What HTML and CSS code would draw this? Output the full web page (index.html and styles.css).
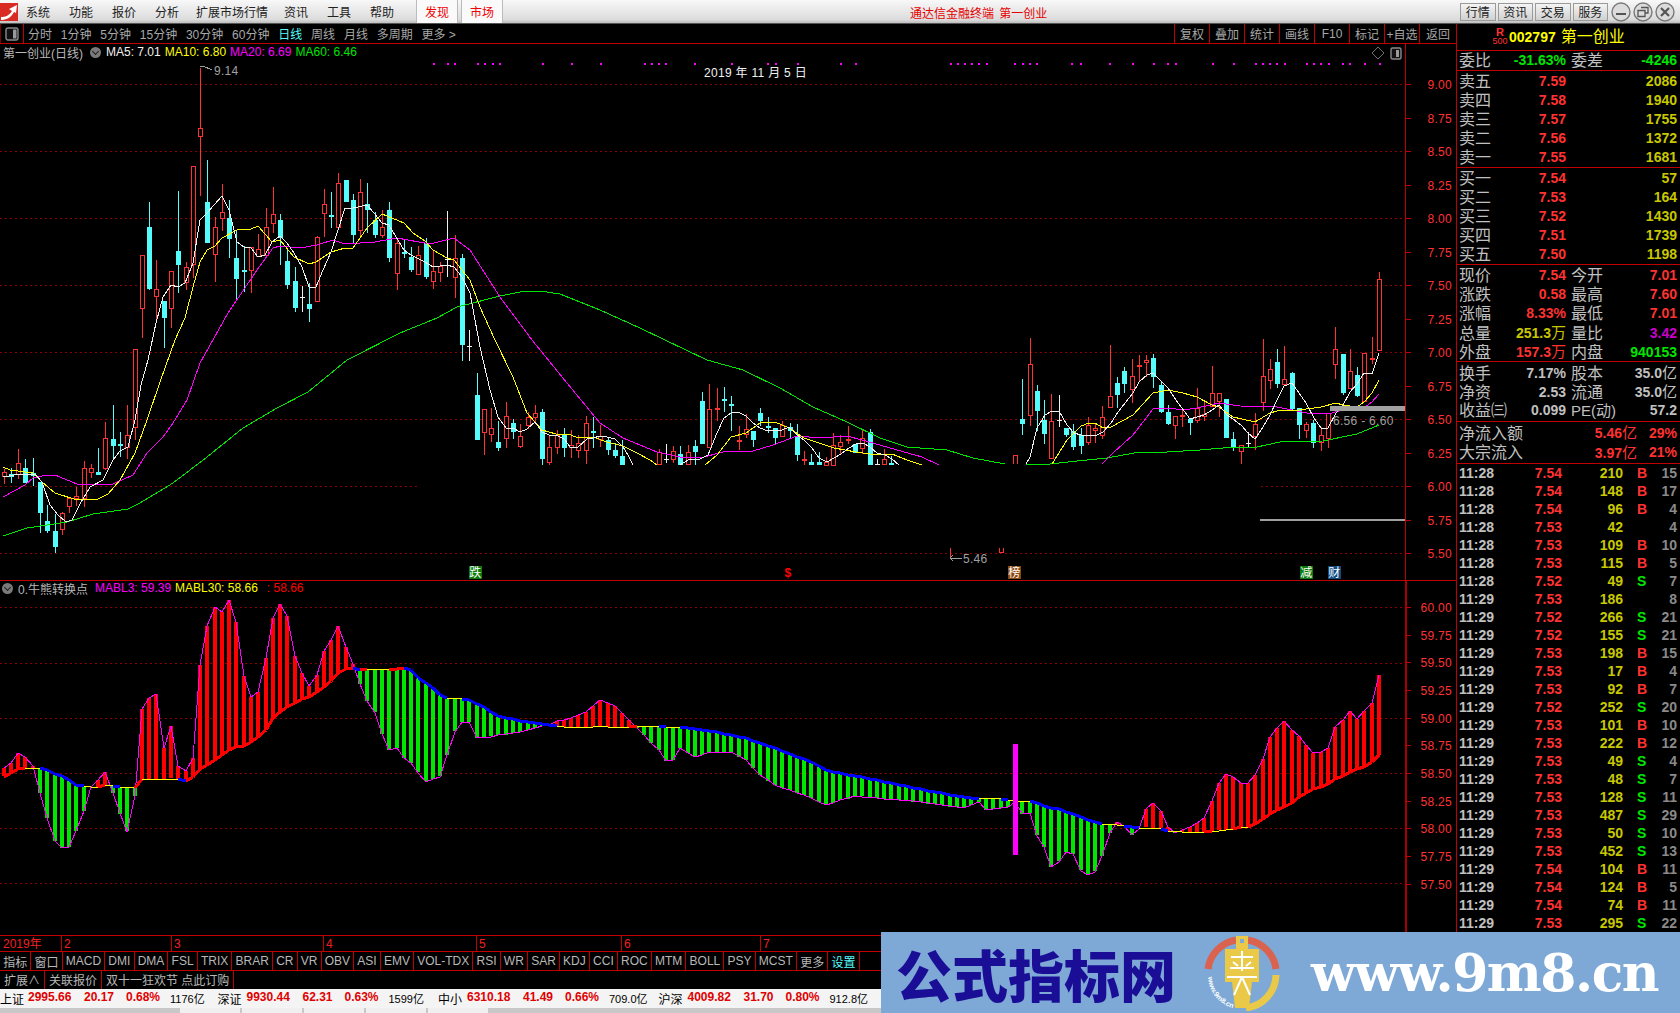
FILE: index.html
```html
<!DOCTYPE html>
<html lang="zh">
<head>
<meta charset="utf-8">
<title>通达信金融终端 第一创业</title>
<link rel="stylesheet" href="styles.css">
</head>
<body>
<div class="app">
  <header class="menubar">
    <svg class="app-logo" viewBox="0 0 18 18" width="18" height="18"><rect width="18" height="18" fill="#d92b24"/><path d="M1 14 C5 14 9 13 12 8 L9 6 L17 2 L16 10 L14 9 C11 15 6 17 1 17 Z" fill="#fff"/></svg>
    <nav class="menu">
      <span class="m1">系统</span><span class="m2">功能</span><span class="m2">报价</span><span class="m2">分析</span><span class="m3">扩展市场行情</span><span class="m4">资讯</span><span class="m2">工具</span><span class="m2">帮助</span>
    </nav>
    <span class="hot hot1">发现</span><span class="hot hot2">市场</span>
    <span class="win-title">通达信金融终端 第一创业</span>
    <div class="win-btns">
      <span class="wb">行情</span><span class="wb">资讯</span><span class="wb">交易</span><span class="wb">服务</span>
      <svg class="wc" viewBox="0 0 20 20" width="20" height="20"><circle cx="10" cy="10" r="9" fill="#dcdcdc" stroke="#7a7a7a" stroke-width="1.4"/><rect x="5" y="11" width="10" height="2" fill="#555"/></svg>
      <svg class="wc" viewBox="0 0 20 20" width="20" height="20"><circle cx="10" cy="10" r="9" fill="#dcdcdc" stroke="#7a7a7a" stroke-width="1.4"/><path d="M8 5.5h7v5.500h-2.500M5 8.500h7v6H5z" fill="none" stroke="#555" stroke-width="1.300"/></svg>
      <svg class="wc" viewBox="0 0 20 20" width="20" height="20"><circle cx="10" cy="10" r="9" fill="#dcdcdc" stroke="#7a7a7a" stroke-width="1.4"/><path d="M6 6l8 8M14 6l-8 8" stroke="#555" stroke-width="2.200"/></svg>
    </div>
  </header>

  <div class="main">
    <section class="left">
      <div class="toolbar">
        <span class="tb-icon"><svg viewBox="0 0 14 14" width="14" height="14"><rect x="1" y="1" width="12" height="12" rx="2" fill="#111" stroke="#8a8a8a" stroke-width="1.400"/><rect x="8" y="2.500" width="3.500" height="9" fill="#9a9a9a"/></svg></span>
        <span class="t t0">分时</span><span class="t">1分钟</span><span class="t">5分钟</span><span class="t">15分钟</span><span class="t">30分钟</span><span class="t">60分钟</span><span class="t on">日线</span><span class="t">周线</span><span class="t">月线</span><span class="t">多周期</span><span class="t">更多 &gt;</span>
        <div class="tools">
          <span class="tool">复权</span><span class="tool">叠加</span><span class="tool">统计</span><span class="tool">画线</span><span class="tool">F10</span><span class="tool">标记</span><span class="tool">+自选</span><span class="tool">返回</span>
        </div>
      </div>

      <div class="pane pane-top">
        <div class="pane-title">
          <span class="pt-name">第一创业(日线)</span>
          <span class="chev"></span>
          <span class="c-w">MA5: 7.01</span><span class="c-y">MA10: 6.80</span><span class="c-m">MA20: 6.69</span><span class="c-g">MA60: 6.46</span>
        </div>
        <svg id="kline" class="chart" viewBox="0 44 1457 536" width="1457" height="536"></svg>
      </div>

      <div class="pane pane-bot">
        <div class="pane-title pt2">
          <span class="chev chev2"></span>
          <span class="pt-name">0.牛熊转换点</span>
          <span class="c-m">MABL3: 59.39</span><span class="c-y">MABL30: 58.66</span><span class="c-r">: 58.66</span>
        </div>
        <svg id="osc" class="chart" viewBox="0 581 1457 354" width="1457" height="354"></svg>
      </div>

      <div class="timeaxis">
        <span class="seg seg0" style="width:61px">2019年</span><span class="seg" style="width:110px">2</span><span class="seg" style="width:152px">3</span><span class="seg" style="width:153px">4</span><span class="seg" style="width:145px">5</span><span class="seg" style="width:139px">6</span><span class="seg" style="width:140px">7</span>
      </div>

      <div class="tabs">
        <span>指标</span><span>窗口</span><span>MACD</span><span>DMI</span><span>DMA</span><span>FSL</span><span>TRIX</span><span>BRAR</span><span>CR</span><span>VR</span><span>OBV</span><span>ASI</span><span>EMV</span><span>VOL-TDX</span><span>RSI</span><span>WR</span><span>SAR</span><span>KDJ</span><span>CCI</span><span>ROC</span><span>MTM</span><span>BOLL</span><span>PSY</span><span>MCST</span><span>更多</span><span class="on">设置</span>
      </div>
      <div class="tabs tabs2">
        <span>扩展∧</span><span>关联报价</span><span>双十一狂欢节 点此订购</span>
      </div>

      <div class="status">
        <div class="st"><b>上证</b><i class="w1">2995.66</i><i class="w2">20.17</i><i class="w3">0.68%</i><em>1176亿</em></div>
        <div class="st"><b>深证</b><i class="w1">9930.44</i><i class="w2">62.31</i><i class="w3">0.63%</i><em>1599亿</em></div>
        <div class="st"><b>中小</b><i class="w1">6310.18</i><i class="w2">41.49</i><i class="w3">0.66%</i><em>709.0亿</em></div>
        <div class="st"><b>沪深</b><i class="w1">4009.82</i><i class="w2">31.70</i><i class="w3">0.80%</i><em>912.8亿</em></div>
      </div>
      <div class="taskbar"><span></span><span></span><span></span><span></span><span></span></div>
    </section>

    <aside class="right">
      <div class="sec head">
        <span class="r500"><b>R</b><small>500</small></span><b class="code">002797</b><span class="sname">第一创业</span>
      </div>
      <div class="sec"><div class="q"><span>委比</span><b class="g">-31.63%</b><span class="l2">委差</span><b class="g">-4246</b></div></div>
      <div class="sec pad1">
        <div class="q a"><span>卖五</span><b class="r">7.59</b><b class="y">2086</b></div>
        <div class="q a"><span>卖四</span><b class="r">7.58</b><b class="y">1940</b></div>
        <div class="q a"><span>卖三</span><b class="r">7.57</b><b class="y">1755</b></div>
        <div class="q a"><span>卖二</span><b class="r">7.56</b><b class="y">1372</b></div>
        <div class="q a"><span>卖一</span><b class="r">7.55</b><b class="y">1681</b></div>
      </div>
      <div class="sec pad1">
        <div class="q a"><span>买一</span><b class="r">7.54</b><b class="y">57</b></div>
        <div class="q a"><span>买二</span><b class="r">7.53</b><b class="y">164</b></div>
        <div class="q a"><span>买三</span><b class="r">7.52</b><b class="y">1430</b></div>
        <div class="q a"><span>买四</span><b class="r">7.51</b><b class="y">1739</b></div>
        <div class="q a"><span>买五</span><b class="r">7.50</b><b class="y">1198</b></div>
      </div>
      <div class="sec pad1">
        <div class="q"><span>现价</span><b class="r">7.54</b><span class="l2">今开</span><b class="r">7.01</b></div>
        <div class="q"><span>涨跌</span><b class="r">0.58</b><span class="l2">最高</span><b class="r">7.60</b></div>
        <div class="q"><span>涨幅</span><b class="r">8.33%</b><span class="l2">最低</span><b class="r">7.01</b></div>
        <div class="q"><span>总量</span><b class="y">251.3<u>万</u></b><span class="l2">量比</span><b class="p">3.42</b></div>
        <div class="q"><span>外盘</span><b class="r">157.3<u>万</u></b><span class="l2">内盘</span><b class="g">940153</b></div>
      </div>
      <div class="sec pad1 pad3">
        <div class="q"><span>换手</span><b class="s">7.17%</b><span class="l2">股本</span><b class="s">35.0<u>亿</u></b></div>
        <div class="q"><span>净资</span><b class="s">2.53</b><span class="l2">流通</span><b class="s">35.0<u>亿</u></b></div>
        <div class="q"><span>收益㈢</span><b class="s">0.099</b><span class="l2 pe">PE(动)</span><b class="s">57.2</b></div>
      </div>
      <div class="sec pad1 pad3">
        <div class="q f"><span>净流入额</span><b class="r">5.46<u>亿</u></b><b class="r">29%</b></div>
        <div class="q f"><span>大宗流入</span><b class="r">3.97<u>亿</u></b><b class="r">21%</b></div>
      </div>
      <div class="ticks">
        <div class="tk"><b>11:28</b><b class="r">7.54</b><b class="y">210</b><b class="r">B</b><b class="n">15</b></div>
        <div class="tk"><b>11:28</b><b class="r">7.54</b><b class="y">148</b><b class="r">B</b><b class="n">17</b></div>
        <div class="tk"><b>11:28</b><b class="r">7.54</b><b class="y">96</b><b class="r">B</b><b class="n">4</b></div>
        <div class="tk"><b>11:28</b><b class="r">7.53</b><b class="y">42</b><b></b><b class="n">4</b></div>
        <div class="tk"><b>11:28</b><b class="r">7.53</b><b class="y">109</b><b class="r">B</b><b class="n">10</b></div>
        <div class="tk"><b>11:28</b><b class="r">7.53</b><b class="y">115</b><b class="r">B</b><b class="n">5</b></div>
        <div class="tk"><b>11:28</b><b class="r">7.52</b><b class="y">49</b><b class="g">S</b><b class="n">7</b></div>
        <div class="tk"><b>11:29</b><b class="r">7.53</b><b class="y">186</b><b></b><b class="n">8</b></div>
        <div class="tk"><b>11:29</b><b class="r">7.52</b><b class="y">266</b><b class="g">S</b><b class="n">21</b></div>
        <div class="tk"><b>11:29</b><b class="r">7.52</b><b class="y">155</b><b class="g">S</b><b class="n">21</b></div>
        <div class="tk"><b>11:29</b><b class="r">7.53</b><b class="y">198</b><b class="r">B</b><b class="n">15</b></div>
        <div class="tk"><b>11:29</b><b class="r">7.53</b><b class="y">17</b><b class="r">B</b><b class="n">4</b></div>
        <div class="tk"><b>11:29</b><b class="r">7.53</b><b class="y">92</b><b class="r">B</b><b class="n">7</b></div>
        <div class="tk"><b>11:29</b><b class="r">7.52</b><b class="y">252</b><b class="g">S</b><b class="n">20</b></div>
        <div class="tk"><b>11:29</b><b class="r">7.53</b><b class="y">101</b><b class="r">B</b><b class="n">10</b></div>
        <div class="tk"><b>11:29</b><b class="r">7.53</b><b class="y">222</b><b class="r">B</b><b class="n">12</b></div>
        <div class="tk"><b>11:29</b><b class="r">7.53</b><b class="y">49</b><b class="g">S</b><b class="n">4</b></div>
        <div class="tk"><b>11:29</b><b class="r">7.53</b><b class="y">48</b><b class="g">S</b><b class="n">7</b></div>
        <div class="tk"><b>11:29</b><b class="r">7.53</b><b class="y">128</b><b class="g">S</b><b class="n">11</b></div>
        <div class="tk"><b>11:29</b><b class="r">7.53</b><b class="y">487</b><b class="g">S</b><b class="n">29</b></div>
        <div class="tk"><b>11:29</b><b class="r">7.53</b><b class="y">50</b><b class="g">S</b><b class="n">10</b></div>
        <div class="tk"><b>11:29</b><b class="r">7.53</b><b class="y">452</b><b class="g">S</b><b class="n">13</b></div>
        <div class="tk"><b>11:29</b><b class="r">7.54</b><b class="y">104</b><b class="r">B</b><b class="n">11</b></div>
        <div class="tk"><b>11:29</b><b class="r">7.54</b><b class="y">124</b><b class="r">B</b><b class="n">5</b></div>
        <div class="tk"><b>11:29</b><b class="r">7.54</b><b class="y">74</b><b class="r">B</b><b class="n">11</b></div>
        <div class="tk"><b>11:29</b><b class="r">7.53</b><b class="y">295</b><b class="g">S</b><b class="n">22</b></div>
      </div>
    </aside>
  </div>

  <div class="watermark">
    <span class="wm-cn">公式指标网</span>
    <svg class="wm-logo" viewBox="0 0 80 76" width="80" height="76">
      <path d="M34 5 A34 34 0 0 0 6 34" fill="none" stroke="#d9634f" stroke-width="7"/>
      <path d="M46 5 A34 34 0 0 1 74 34" fill="none" stroke="#d9634f" stroke-width="7"/>
      <path d="M74 40 A34 34 0 0 1 44 73" fill="none" stroke="#e9c947" stroke-width="7"/>
      <path id="wmarc" d="M6 42 A34 34 0 0 0 36 74" fill="none" stroke="#fff" stroke-width="0"/>
      <rect x="34" y="1" width="12" height="15" fill="#e9c947"/>
      <rect x="38" y="4" width="4" height="4" fill="#7ea9d6"/>
      <rect x="23" y="14" width="34" height="27" fill="#e9c947"/>
      <rect x="23" y="41" width="34" height="6" fill="#e9c947"/>
      <path d="M30 47h20l-3 26h-14z" fill="#e9c947"/>
      <path d="M29 22h22M40 16v20M28 33h24M31 27l5 4M49 27l-5 4M25 42h30M40 42l-8 18M40 42l8 18" stroke="#fff" stroke-width="2" fill="none"/>
      <text class="wm-arc"><textPath href="#wmarc">www.9m8.cn</textPath></text>
    </svg>
    <span class="wm-url">www.9m8.cn</span>
  </div>
</div>
<script src="script.js"></script>
</body>
</html>
```
FILE: styles.css
```css
* { box-sizing: border-box; }
html, body { margin: 0; padding: 0; background: #000; overflow: hidden; }
body { font-family: "Liberation Sans", "Noto Sans CJK SC", sans-serif; font-size: 12px; color: #c0c0c0; }
.app { position: relative; width: 1680px; height: 1013px; display: flex; flex-direction: column; overflow: hidden; }

/* menu bar */
.menubar { height: 24px; flex: none; display: flex; align-items: center; position: relative; color: #000;
  background: linear-gradient(#f8f8f8, #dcdcdc 85%, #bdbdbd); border-bottom: 1px solid #555; }
.app-logo { margin: 1px 0 0 0; flex: none; }
.menu { display: flex; font-size: 12px; color: #222; }
.menu span { margin-left: 19px; }
.menu .m1 { margin-left: 8px; }
.menu .m3 { margin-left: 17px; }
.menu .m4 { margin-left: 16px; }
.hot { color: #f00000; height: 23px; display: flex; align-items: center; justify-content: center; background: #fafafa; border-left: 1px solid #bbb; border-right: 1px solid #bbb; width: 42px; }
.hot1 { margin-left: 22px; }
.hot2 { margin-left: 3px; }
.win-title { position: absolute; left: 910px; top: 4px; color: #e60000; word-spacing: 2px; }
.win-btns { margin-left: auto; display: flex; align-items: center; padding-right: 5px; }
.wb { width: 35.500px; height: 18px; margin-right: 2px; display: flex; align-items: center; justify-content: center; color: #222;
  border: 1px solid #9a9a9a; background: linear-gradient(#f4f4f4, #d0d0d0); }
.wc { margin-left: 2px; }
.wb + .wc { margin-left: 1px; }

.main { flex: 1; display: flex; min-height: 0; }
.left { width: 1457px; flex: none; display: flex; flex-direction: column; border-right: 1px solid #c00000; }
.right { flex: 1; min-width: 0; }

/* toolbar */
.toolbar { height: 20px; flex: none; display: flex; align-items: center; border-bottom: 1px solid #c00000; color: #a8a8a8; }
.tb-icon { width: 24px; height: 19px; border-right: 1px solid #c00000; border-left: 1px solid #800000; display: flex; align-items: center; justify-content: center; flex: none; }
.t { margin-left: 8.800px; white-space: nowrap; }
.t0 { margin-left: 4px; }
.t.on { color: #54fcfc; }
.tools { margin-left: auto; display: flex; height: 19px; }
.tool { width: 35px; display: flex; align-items: center; justify-content: center; border-left: 1px solid #c00000; letter-spacing: 0; }
.tool:last-child { width: 37px; }

/* chart panes */
.pane { position: relative; flex: none; overflow: hidden; }
.pane-top { height: 537px; border-bottom: 1px solid #c00000; }
.pane-bot { height: 354px; }
.chart { display: block; }
.pane-title { position: absolute; left: 3px; top: 0; height: 16px; display: flex; align-items: center; white-space: nowrap; }
.pt2 { top: -1px; left: 2px; }
.pt-name { color: #b8b8b8; }
.pane-title > span { margin-right: 4px; }
.pane-title .pt-name { margin-right: 7px; }
.pane-title .chev { margin-right: 5px; }
.pane-title .c-y + .c-r { margin-left: 5px; }
.chev { width: 11px; height: 11px; border-radius: 50%; background: #7a7a7a; position: relative; flex: none; }
.chev::after { content: ""; position: absolute; left: 3px; top: 2px; width: 4px; height: 4px; border-right: 1.500px solid #222; border-bottom: 1.500px solid #222; transform: rotate(45deg); }
.c-w { color: #f0f0f0; } .c-y { color: #ffff00; } .c-m { color: #ff00ff; } .c-g { color: #00e600; } .c-r { color: #ff0000; }
#kline text, #osc text { font-family: "Liberation Sans", "Noto Sans CJK SC", sans-serif; font-size: 12px; letter-spacing: .3px; }

/* time axis and tabs */
.timeaxis { height: 17px; flex: none; display: flex; border-top: 1px solid #c00000; border-bottom: 1px solid #c00000; color: #f02020; line-height: 16px; }
.seg { border-left: 1px solid #c00000; padding-left: 2px; flex: none; }
.seg0 { border-left: 0; padding-left: 3px; }
.tabs { height: 19px; flex: none; display: flex; border-bottom: 1px solid #c00000; }
.tabs span { display: flex; align-items: center; padding: 0 3.150px; border-right: 1px solid #c00000; white-space: nowrap; color: #b8b8b8; }
.tabs .on { color: #54fcfc; }
.tabs2 { height: 18px; border-bottom: 0; }
.tabs2 span { padding: 0 4px 2px; }
.status { height: 19px; flex: none; display: flex; background: #f4f4f4; color: #000; width: 881px; align-items: center; overflow: hidden; }
.st { width: 220.500px; flex: none; display: flex; white-space: nowrap; font-size: 12px; }
.st b { font-weight: 400; width: 28px; flex: none; }
.st + .st b { margin-left: -3px; width: 29px; }
.st i { font-style: normal; font-weight: 700; color: #e00000; flex: none; }
.st .w1 { width: 56px; } .st .w2 { width: 42px; } .st .w3 { width: 44px; }
.st em { font-style: normal; flex: none; font-size: 11px; }
.taskbar { flex: 1; background: #c8c8c8; display: flex; padding-left: 180px; width: 881px; }
.taskbar span { width: 60px; background: #f0f0f0; margin-right: 2px; }

/* quote panel */
.sec { border-bottom: 1px solid #c00000; }
.head { height: 27px; display: flex; align-items: center; padding-left: 35px; }
.r500 { display: flex; flex-direction: column; width: 16px; color: #ff3232; text-align: center; line-height: 9px; font-size: 10px; }
.r500 b { font-size: 11px; }
.r500 small { font-size: 9px; }
.code { color: #ffff00; font-size: 14px; margin-left: 1px; }
.sname { color: #ffff00; font-size: 16px; margin-left: 5px; line-height: 1; }
.q { display: grid; grid-template-columns: 40px 67px 45px 66px; padding-left: 2px; height: 19px; align-items: center; font-size: 16px; color: #c0c0c0; line-height: 19px; white-space: nowrap; }
.q.a { grid-template-columns: 40px 67px 111px; }
.q.f { grid-template-columns: 64px 114px 40px; height: 19.500px; }
.q b { font-size: 14px; text-align: right; }
.q u { text-decoration: none; font-weight: 400; font-size: 15px; }
.q .l2 { padding-left: 5px; font-size: 16px; }
.q .pe { font-size: 15px; }
.pad1 { padding-top: 1px; }
.pad3 { padding-bottom: 1px; }
.r { color: #ff3232; } .y { color: #c8c800; } .g { color: #00e600; } .p { color: #c800c8; } .s { color: #c0c0c0; } .n { color: #8a8a8a; }
.ticks { display: block; }
.tk { display: grid; grid-template-columns: 36px 67px 61px 27px 27px; padding-left: 2px; height: 18px; align-items: center; line-height: 18px; font-size: 14px; color: #c0c0c0; }
.tk b { text-align: right; }
.tk b:first-child { text-align: left; }
.tk b:nth-child(4) { text-align: left; padding-left: 14px; }

/* watermark banner */
.watermark { position: absolute; left: 881px; top: 932px; right: 0; bottom: 0; background: #7ea9d6; display: flex; align-items: center; overflow: hidden; }
.wm-cn { color: #1a0e96; font-family: "Noto Sans CJK SC", sans-serif; font-weight: 900; font-size: 56px; line-height: 1; margin-left: 15px; width: 306px; flex: none; white-space: nowrap; }
.wm-logo { flex: none; }
.wm-arc { font-family: "Liberation Sans", sans-serif; font-size: 7px; font-weight: 700; fill: #fff; }
.wm-url { color: #fff; font-family: "DejaVu Serif", serif; font-weight: 700; font-size: 52px; line-height: 1; margin-left: 29px; letter-spacing: -1.500px; white-space: nowrap; }
```
FILE: script.js
```js
var NS = "http://www.w3.org/2000/svg";
var RED = "#ff3232", CY = "#54fcfc", WH = "#f0f0f0";
function X(i) { return Math.round(3.6 + 7.277 * i); }
function el(p, n, a, t) {
  var e = document.createElementNS(NS, n);
  for (var k in a) e.setAttribute(k, a[k]);
  if (t) e.textContent = t;
  p.appendChild(e);
  return e;
}
function rect(p, x, y, w, h, f) { el(p, "rect", { x: x, y: y, width: w, height: Math.max(h, 1), fill: f, "shape-rendering": "crispEdges" }); }
function line(p, pts, c, w) { el(p, "polyline", { points: pts.map(function (q) { return q[0] + "," + q[1]; }).join(" "), fill: "none", stroke: c, "stroke-width": w || 1, "shape-rendering": "crispEdges" }); }
function grid(p, y, x1, x2) { el(p, "line", { x1: x1, x2: x2, y1: y + .5, y2: y + .5, stroke: "#8c0000", "stroke-dasharray": "2 3", "shape-rendering": "crispEdges" }); }
function txt(p, x, y, s, c, anchor) { el(p, "text", { x: x, y: y, fill: c, "text-anchor": anchor || "start", "dominant-baseline": "central" }, s); }

/* candles: [type, bodyTop, bodyBottom, high, low]; r hollow red, c solid cyan, d red doji, k cyan doji, w white doji */
var A = [
["r",472,477,469,484],["c",474,477,468,483],["r",463,475,449,479],["c",468,483,459,483],["c",473,476,458,486],["c",482,513,482,533],["c",521,531,505,533],["c",531,547,514,553],["r",513,530,512,535],["r",498,507,497,513],
["r",496,499,487,506],["r",468,499,461,507],["r",468,473,464,478],["c",472,475,448,475],["r",438,469,422,470],["c",439,446,405,458],["k",444,445,432,457],["r",435,448,405,459],["r",349,428,349,440],["r",255,309,255,338],
["c",227,289,202,290],["r",289,297,260,320],["c",301,318,301,348],["r",271,309,271,328],["c",251,265,191,293],["r",267,283,262,290],["r",166,265,166,278],["r",128,137,68,196],["c",202,243,160,243],["r",227,255,217,282],
["r",212,219,184,231],["c",218,239,200,258],["c",258,279,230,301],["k",270,270,246,292],["r",247,271,247,293],["r",249,257,234,257],["r",227,256,208,257],["r",214,224,187,233],["c",220,238,214,265],["c",261,285,250,289],
["c",281,308,267,312],["w",297,297,286,312],["c",304,309,283,322],["r",237,302,236,302],["r",204,214,189,237],["k",215,215,192,228],["r",183,228,173,228],["c",180,202,180,202],["c",200,235,194,244],["r",192,231,179,237],
["c",204,210,183,233],["c",220,235,212,238],["r",227,236,210,238],["c",210,258,202,262],["r",243,274,238,290],["k",252,252,239,258],["c",257,270,247,272],["r",255,275,246,275],["c",243,277,238,279],["r",271,282,250,289],
["r",266,273,262,282],["w",259,259,211,277],["r",258,278,235,298],["c",258,345,254,361],["w",346,346,330,361],["c",395,440,373,440],["r",409,433,409,455],["r",428,435,408,442],["c",442,448,421,451],["r",416,439,402,448],
["c",423,432,419,439],["r",436,447,424,448],["r",417,426,412,429],["r",413,418,405,423],["c",412,459,409,465],["r",447,463,435,465],["r",435,448,430,454],["c",434,448,428,457],["r",445,448,430,458],["r",443,451,435,458],
["r",423,451,416,464],["k",431,431,417,448],["r",436,440,425,447],["c",440,450,438,455],["c",450,456,443,458],["c",456,465,440,465]
];
var B = [
["r",452,465,449,465],["w",459,459,444,463],["r",451,460,446,463],["c",454,465,446,465],["r",452,465,445,465],["c",446,452,440,465],["c",401,444,392,444],["r",409,448,384,448],["d",408,408,388,421],["k",399,399,387,412],
["k",404,404,396,431],["d",440,440,426,450],["r",429,435,414,438],["c",431,440,431,447],["c",413,421,408,426],["k",426,426,417,433],["c",428,438,428,444],["r",425,437,421,437],["c",427,431,423,439],["c",436,455,424,461],
["d",459,459,451,465],["c",462,465,454,465],["c",462,465,452,465],["r",462,466,457,465],["r",445,466,433,465],["r",442,447,435,455],["d",439,439,426,444],["c",444,453,444,453],["r",438,449,429,454],["c",432,465,429,465],
["w",464,464,459,465],["r",459,465,449,465],["k",463,463,456,465]
];
var C = [
["c",419,424,379,435],["r",364,416,338,426],["c",391,411,385,431],["c",420,434,400,444],["r",421,459,394,459],["w",420,420,395,427],["c",428,435,428,437],["c",431,447,424,450],["c",435,446,428,454],["r",425,443,417,445],
["r",428,431,423,443],["r",417,436,406,439],["r",396,408,345,408],["c",383,395,377,408],["c",371,384,367,393],["r",376,390,359,403],["d",365,365,355,381],["r",360,363,355,377],["c",358,377,354,388],["c",385,412,382,413],
["c",412,424,405,425],["r",416,426,416,439],["r",415,417,410,427],["c",419,423,419,435],["r",408,421,388,423],["r",414,417,402,421],["r",393,407,366,407],["r",393,402,393,417],["c",399,438,399,438],["c",439,447,432,451],
["r",445,452,445,464],["w",443,443,432,447],["r",424,437,413,450],["r",376,403,339,411],["r",369,381,359,389],["c",362,384,349,388],["r",379,385,346,385],["c",373,409,372,410],["c",408,425,408,439],["r",424,431,422,438],
["c",423,443,420,448],["r",435,443,427,451],["r",413,439,413,448],["r",349,365,327,379],["c",354,393,354,395],["r",371,389,349,389],["c",375,396,367,397],["r",353,402,353,402],["d",358,358,337,364],["r",279,351,272,351]
];
var WL = [[3,477],[20,474],[35,474],[42,482],[50,505],[58,515],[66,522],[72,520],[80,504],[90,487],[103,480],[113,460],[120,451],[128,447],[135,420],[141,385],[148,360],[156,323],[163,297],[171,285],[178,287],[185,283],[193,263],[200,220],[207,213],[222,196],[229,210],[237,242],[244,247],[251,248],[258,257],[265,255],[272,242],[280,236],[287,243],[294,253],[302,267],[309,287],[316,287],[323,270],[331,252],[338,230],[345,208],[353,208],[367,205],[374,213],[382,223],[389,225],[396,237],[404,250],[411,255],[425,262],[433,267],[447,265],[454,267],[462,277],[470,293],[480,347],[490,390],[498,417],[506,428],[513,428],[520,432],[527,429],[535,422],[542,432],[549,435],[556,435],[564,439],[571,448],[578,447],[587,439],[593,438],[600,436],[607,437],[615,439],[623,447],[628,455],[633,465]];
var WL2 = [[680,465],[688,460],[700,459],[708,455],[717,433],[724,418],[731,413],[738,412],[746,416],[753,423],[760,428],[768,431],[782,430],[789,427],[797,435],[804,440],[812,448],[819,458],[827,462],[834,458],[841,454],[849,448],[856,444],[863,443],[870,447],[877,453],[885,455],[892,459],[899,465]];
var WL3 = [[1026,464],[1030,457],[1037,428],[1045,415],[1052,411],[1059,411],[1067,425],[1074,433],[1081,435],[1095,436],[1103,432],[1111,423],[1118,412],[1133,393],[1139,382],[1147,375],[1153,373],[1161,381],[1168,388],[1176,400],[1190,419],[1197,417],[1204,415],[1212,410],[1219,405],[1227,415],[1233,419],[1241,425],[1248,433],[1255,439],[1263,427],[1270,415],[1277,400],[1284,386],[1292,383],[1299,393],[1306,403],[1314,418],[1321,428],[1328,428],[1336,413],[1343,405],[1350,392],[1357,384],[1364,373],[1372,374],[1379,353]];
var YL = [[3,467],[10,470],[33,473],[42,482],[55,493],[77,500],[98,499],[108,494],[120,480],[135,453],[147,420],[160,382],[175,340],[185,318],[193,287],[200,262],[207,250],[215,246],[222,238],[237,230],[251,229],[258,226],[272,242],[280,240],[294,257],[309,264],[316,262],[331,252],[345,248],[353,248],[367,228],[382,214],[404,223],[413,233],[425,241],[433,250],[447,258],[454,260],[470,280],[480,307],[495,340],[513,377],[527,413],[542,430],[556,434],[571,435],[578,438],[593,437],[607,442],[623,446],[637,453],[650,460],[657,465]];
var YL2 = [[705,465],[717,455],[731,437],[746,433],[760,423],[775,422],[789,428],[804,438],[819,443],[834,448],[856,452],[870,454],[892,454],[907,460],[922,465]];
var YL3 = [[1052,464],[1067,440],[1081,426],[1089,423],[1095,423],[1103,428],[1111,427],[1133,415],[1153,393],[1168,390],[1183,393],[1197,397],[1212,405],[1219,407],[1233,417],[1255,422],[1270,413],[1277,411],[1299,410],[1321,407],[1336,403],[1343,405],[1357,407],[1364,402],[1372,393],[1379,380]];
var ML = [[3,497],[25,485],[33,478],[47,475],[55,475],[77,484],[113,484],[133,475],[147,453],[163,437],[173,423],[187,400],[200,363],[228,313],[257,270],[273,248],[280,246],[300,248],[317,245],[333,240],[345,244],[375,242],[397,238],[430,244],[454,238],[470,250],[500,297],[532,340],[567,383],[600,423],[623,438],[640,445],[657,452],[680,457],[700,458],[723,452],[753,451],[773,445],[797,436],[820,438],[847,436],[873,443],[897,450],[922,457],[939,465]];
var ML2 = [[1102,464],[1113,453],[1133,435],[1153,409],[1168,408],[1183,410],[1197,408],[1219,403],[1240,406],[1277,407],[1292,410],[1307,413],[1328,414],[1350,408],[1365,407],[1372,402],[1379,394]];
var GL = [[3,536],[27,528],[67,522],[93,514],[128,509],[140,503],[173,483],[207,457],[243,428],[277,408],[308,392],[347,360],[400,333],[437,318],[457,307],[500,296],[520,292],[540,291],[560,294],[600,310],[640,328],[665,340],[707,360],[743,370],[780,388],[813,407],[847,422],[880,438],[907,447],[947,450],[973,458],[1005,464]];
var GL2 = [[1026,464],[1050,464],[1077,461],[1107,458],[1140,452],[1167,452],[1200,450],[1223,448],[1257,447],[1280,442],[1323,441],[1357,434],[1379,425]];

function candle(g, i, d) {
  var x = X(i), t = d[0], c = (t === "r" || t === "d") ? RED : (t === "w" ? WH : CY);
  rect(g, x, d[3], 1, d[4] - d[3], c);
  if (t === "r") {
    el(g, "rect", { x: x - 2 + .5, y: d[1] + .5, width: 4, height: Math.max(d[2] - d[1] - 1, 1), fill: "#000", stroke: c, "shape-rendering": "crispEdges" });
  } else if (t === "c") {
    rect(g, x - 2, d[1], 5, d[2] - d[1], c);
  } else {
    rect(g, x - 2, d[1], 5, t === "w" ? 1 : 2, c);
  }
}

(function () {
  var s = document.getElementById("kline");
  [84, 151, 218, 285, 352, 419, 553].forEach(function (y) { grid(s, y, 0, 1405); });
  grid(s, 486, 0, 418); grid(s, 486, 1261, 1405);
  A.forEach(function (d, i) { candle(s, i, d); });
  B.forEach(function (d, i) { candle(s, i + 90, d); });
  C.forEach(function (d, i) { candle(s, i + 140, d); });
  rect(s, X(130), 548, 1, 9, RED);
  rect(s, X(137) - 2, 548, 1, 5, RED); rect(s, X(137) + 2, 548, 1, 5, RED); rect(s, X(137) - 2, 552, 5, 1, RED);
  rect(s, X(139) - 2, 455, 5, 1, RED); rect(s, X(139) - 2, 455, 1, 9, RED); rect(s, X(139) + 2, 455, 1, 9, RED);
  [[GL, "#00e600"], [GL2, "#00e600"], [ML, "#ff00ff"], [ML2, "#ff00ff"], [YL, "#ffff00"], [YL2, "#ffff00"], [YL3, "#ffff00"], [WL, WH], [WL2, WH], [WL3, WH]].forEach(function (l) { line(s, l[0], l[1]); });

  [433, 447, 454, 477, 484, 492, 499, 542, 571, 600, 644, 651, 658, 665, 694, 731, 767, 775, 797, 840, 855, 950, 957, 964, 971, 978, 986, 1014, 1022, 1029, 1036, 1071, 1080, 1109, 1132, 1153, 1167, 1175, 1212, 1233, 1255, 1262, 1269, 1276, 1284, 1306, 1313, 1320, 1328, 1342, 1349, 1364, 1379].forEach(function (x) { rect(s, x, 63, 2, 2, "#ff00ff"); });

  line(s, [[200, 66], [203, 66], [212, 70]], "#a0a0a0");
  txt(s, 214, 71, "9.14", "#a0a0a0");
  txt(s, 704, 73, "2019 年 11 月 5 日", "#f0f0f0");
  line(s, [[950, 558], [962, 558]], "#a0a0a0"); line(s, [[953, 555], [950, 558], [953, 561]], "#a0a0a0");
  txt(s, 963, 559, "5.46", "#a0a0a0");
  rect(s, 1330, 406, 75, 5, "#a0a0a0");
  txt(s, 1333, 421, "6.56 - 6.60", "#a0a0a0");
  rect(s, 1260, 519, 145, 2, "#a0a0a0");

  [[469, "跌", "#0a7a0a", "#fff"], [1008, "榜", "#8a4a10", "#fff"], [1300, "减", "#0a7a0a", "#fff"], [1328, "财", "#104a80", "#fff"]].forEach(function (b) {
    rect(s, b[0], 566, 13, 13, b[2]);
    txt(s, b[0] + 6.5, 572.5, b[1], b[3], "middle");
  });
  el(s, "text", { x: 788, y: 573, fill: "#ff0000", "text-anchor": "middle", "dominant-baseline": "central", "font-weight": "700" }, "$");

  el(s, "path", { d: "M1378 47l6 6-6 6-6-6z", fill: "none", stroke: "#707070" });
  el(s, "rect", { x: 1391, y: 48, width: 10, height: 11, rx: 1.5, fill: "#111", stroke: "#8a8a8a", "stroke-width": 1.4 });
  rect(s, 1396, 50, 3, 7, "#9a9a9a");

  rect(s, 1405, 44, 1, 536, "#c00000");
  for (var i = 0; i <= 14; i++) {
    var y = Math.round(84.3 + i * 33.5);
    rect(s, 1405, y, 6, 1, "#c00000");
    txt(s, 1452, y + .5, (9 - i * .25).toFixed(2), "#ff3232", "end");
  }
})();

/* oscillator: per bar [slowY, fastY], in page pixels */
(function () {
  var s = document.getElementById("osc");
  var a = [[535,560],[520,548],[490,538],[500,533],[527,533]].map(function (p) { return [p[1], p[0]]; }).concat([
    [535,610],[540,683],[552,752],[558,775],[570,770],[585,722],[588,662],[590,590],[592,570],[585,545],[587,608],[590,670],[592,725],[594,617],[568,358],[568,325],[568,313],[567,475],[566,409],[566,527],[573,543],[562,505],[538,225],[525,108],[510,52],[495,67],[480,30],[470,97],[467,258],[455,322],[440,305],[420,203],[385,83],[365,42],[350,78],[338,197],[327,250],[320,288],[305,255],[290,182],[272,150],[250,108],[238,170],[233,222],[240,282],[237,332],[238,368],[238,432],[240,480],[237,473],[234,505],[240,520],[265,548],[280,575],[295,567],[316,560],[325,495],[325,425],[327,396],[330,395],[342,445],[352,442],[367,440],[378,435]
  ]).map(function (p) { return [590 + p[0] / 3, 590 + p[1] / 3]; });
  var ctl = [[68,716,735],[70,719,733],[72,722,730],[74,724,726],[75,725,725],[76,726,721],[78,727,718],[80,727,712],[82,726,700],[84,727,706],[86,727,720],[87,726,728],[88,726,735],[90,726,750],[91,727,761],[92,727,760],[93,727,748],[95,729,757],[97,731,752],[100,735,752],[102,738,760],[104,743,775],[106,748,785],[108,754,790],[111,762,798],[113,770,805],[115,773,800],[117,776,796],[120,780,798],[124,786,800],[128,792,804],[132,797,808],[134,799,802],[135,798.3,810]];
  for (var i = 69; i <= 134; i++) {
    for (var j = 0; j < ctl.length - 1; j++) if (i >= ctl[j][0] && i <= ctl[j + 1][0]) {
      var u = (i - ctl[j][0]) / (ctl[j + 1][0] - ctl[j][0]);
      a[i] = [ctl[j][1] + u * (ctl[j + 1][1] - ctl[j][1]), ctl[j][2] + u * (ctl[j + 1][2] - ctl[j][2])];
      break;
    }
  }
  [[355,390],[355,388],[357,385],[360,382],[362,365],[362,400],[363,400],[370,467],[377,500],[383,560],[388,545],[395,515],[402,523],[412,572],[420,585],[427,575],[432,528],[433,460],[435,425],[437,437],[440,465],[443,447],[443,388],[445,370],[447,393],[452,440],[453,460],[455,450],[456,440],[457,430],[457,415],[453,362],[452,310],[450,283],[448,292],[441,310],[441,310],[432,285],[417,238],[402,172],[390,143],[380,123],[370,150],[352,168],[340,195],[328,218],[322,215],[312,203],[298,142],[288,120],[275,92],[268,118],[260,93],[245,68],[225,-15]].forEach(function (p, k) {
    a[135 + k] = [680 + p[0] / 3, 680 + p[1] / 3];
  });

  [607, 663, 718, 773, 828, 883].forEach(function (y) { grid(s, y, 0, 1405); });

  a.forEach(function (p, i) {
    var t = Math.min(p[0], p[1]), h = Math.abs(p[0] - p[1]);
    if (h < 1) return;
    rect(s, X(i) - 2, Math.round(t), 4, Math.round(h), p[1] < p[0] ? "#ff0000" : "#00e600");
  });
  line(s, a.map(function (p, i) { return [X(i), Math.round(p[1])]; }), "#ff00ff");
  for (var k = 0; k < a.length - 1; k++) {
    var dy = a[k + 1][0] - a[k][0], c, w = 3;
    if (Math.abs(dy) < .7) { c = "#ffff00"; w = 1; } else c = dy < 0 ? "#ff0000" : "#0000ff";
    line(s, [[X(k), Math.round(a[k][0])], [X(k + 1), Math.round(a[k + 1][0])]], c, w);
  }
  rect(s, 1013, 744, 5, 111, "#ff00ff");

  rect(s, 1405, 581, 2, 354, "#a80000");
  for (var n = 0; n <= 10; n++) {
    var y = Math.round(607 + n * 27.65);
    rect(s, 1405, y, 6, 1, "#c00000");
    txt(s, 1452, y + .5, (60 - n * .25).toFixed(2), "#ff3232", "end");
  }
})();
```
